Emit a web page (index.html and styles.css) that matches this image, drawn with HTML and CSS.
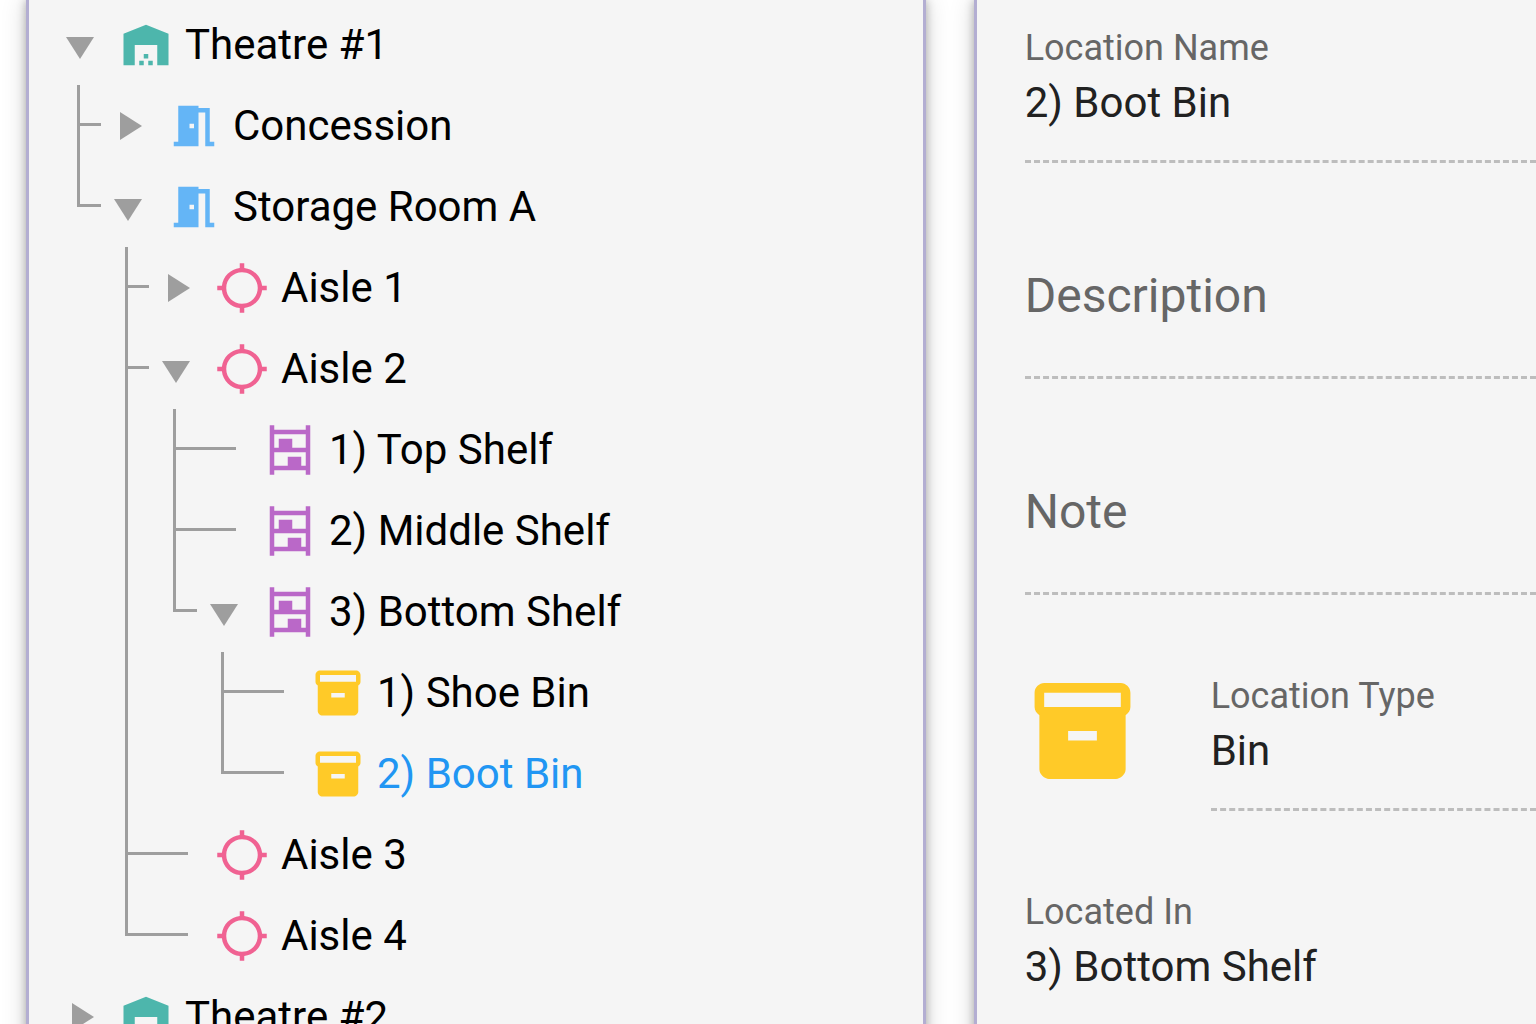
FILE: index.html
```html
<!DOCTYPE html>
<html lang="en">
<head>
<meta charset="utf-8">
<title>Locations</title>
<link rel="stylesheet" href="styles.css">
</head>
<body>
<svg class="sprite" aria-hidden="true">
  <symbol id="open" viewBox="0 0 28 28"><path d="M0 6H28L14 28Z"/></symbol>
  <symbol id="closed" viewBox="0 0 28 28"><path d="M6 0L28 14L6 28Z"/></symbol>
  <symbol id="warehouse" viewBox="0 0 24 24"><path d="M22 21V7L12 3 2 7v14h5v-9h10v9h5zm-11-2H9v2h2v-2zm2-3h-2v2h2v-2zm2 3h-2v2h2v-2z"/></symbol>
  <symbol id="room" viewBox="0 0 24 24"><path d="M14 6v15H3v-2h2V3h9v1h5v15h2v2h-4V6h-3zm-4 5v2h2v-2h-2z"/></symbol>
  <symbol id="aisle" viewBox="0 0 24 24"><path d="M20.94 11c-.46-4.17-3.77-7.48-7.94-7.94V1h-2v2.06C6.83 3.52 3.52 6.83 3.06 11H1v2h2.06c.46 4.17 3.77 7.48 7.94 7.94V23h2v-2.06c4.17-.46 7.48-3.77 7.94-7.94H23v-2h-2.06zM12 19c-3.87 0-7-3.13-7-7s3.13-7 7-7 7 3.13 7 7-3.13 7-7 7z"/></symbol>
  <symbol id="shelf" viewBox="0 0 24 24"><path d="M3 1h2v2h14V1h2v22h-2v-2H5v2H3zM5 5v6h2V7h6v4h6V5zM5 13v6h6v-4h6v4h2v-6z"/></symbol>
  <symbol id="bin" viewBox="0 0 24 24"><path d="M20 2H4c-1 0-2 .9-2 2v3.01c0 .72.43 1.34 1 1.69V20c0 1.1 1.1 2 2 2h14c.9 0 2-.9 2-2V8.7c.57-.35 1-.97 1-1.69V4c0-1.1-1-2-2-2zm-5 12H9v-2h6v2zm5-7H4V4h16v3z"/></symbol>
</svg>
<main class="layout">
  <nav class="panel" aria-label="Locations">
    <ul class="tree">
      <li class="node">
        <div class="row"><button class="toggle" aria-label="Collapse Theatre #1"><svg><use href="#open"/></svg></button><svg class="icon warehouse"><use href="#warehouse"/></svg><span>Theatre #1</span></div>
        <ul class="branch">
          <li class="node">
            <div class="row"><button class="toggle" aria-label="Expand Concession"><svg><use href="#closed"/></svg></button><svg class="icon room"><use href="#room"/></svg><span>Concession</span></div>
          </li>
          <li class="node">
            <div class="row"><button class="toggle" aria-label="Collapse Storage Room A"><svg><use href="#open"/></svg></button><svg class="icon room"><use href="#room"/></svg><span>Storage Room A</span></div>
            <ul class="branch">
              <li class="node">
                <div class="row"><button class="toggle" aria-label="Expand Aisle 1"><svg><use href="#closed"/></svg></button><svg class="icon aisle"><use href="#aisle"/></svg><span>Aisle 1</span></div>
              </li>
              <li class="node">
                <div class="row"><button class="toggle" aria-label="Collapse Aisle 2"><svg><use href="#open"/></svg></button><svg class="icon aisle"><use href="#aisle"/></svg><span>Aisle 2</span></div>
                <ul class="branch">
                  <li class="node leaf"><div class="row"><svg class="icon shelf"><use href="#shelf"/></svg><span>1) Top Shelf</span></div></li>
                  <li class="node leaf"><div class="row"><svg class="icon shelf"><use href="#shelf"/></svg><span>2) Middle Shelf</span></div></li>
                  <li class="node">
                    <div class="row"><button class="toggle" aria-label="Collapse 3) Bottom Shelf"><svg><use href="#open"/></svg></button><svg class="icon shelf"><use href="#shelf"/></svg><span>3) Bottom Shelf</span></div>
                    <ul class="branch">
                      <li class="node leaf"><div class="row"><svg class="icon bin"><use href="#bin"/></svg><span>1) Shoe Bin</span></div></li>
                      <li class="node leaf"><div class="row selected"><svg class="icon bin"><use href="#bin"/></svg><span>2) Boot Bin</span></div></li>
                    </ul>
                  </li>
                </ul>
              </li>
              <li class="node leaf"><div class="row"><svg class="icon aisle"><use href="#aisle"/></svg><span>Aisle 3</span></div></li>
              <li class="node leaf"><div class="row"><svg class="icon aisle"><use href="#aisle"/></svg><span>Aisle 4</span></div></li>
            </ul>
          </li>
        </ul>
      </li>
      <li class="node">
        <div class="row"><button class="toggle" aria-label="Expand Theatre #2"><svg><use href="#closed"/></svg></button><svg class="icon warehouse"><use href="#warehouse"/></svg><span>Theatre #2</span></div>
      </li>
    </ul>
  </nav>
  <form class="panel details">
    <div class="field">
      <label for="name">Location Name</label>
      <input id="name" type="text" value="2) Boot Bin">
    </div>
    <div class="field empty">
      <label for="description">Description</label>
      <input id="description" type="text">
    </div>
    <div class="field empty">
      <label for="note">Note</label>
      <input id="note" type="text">
    </div>
    <div class="type">
      <svg class="type-icon bin"><use href="#bin"/></svg>
      <div class="field">
        <label for="type">Location Type</label>
        <input id="type" type="text" value="Bin">
      </div>
    </div>
    <div class="field">
      <label for="parent">Located In</label>
      <input id="parent" type="text" value="3) Bottom Shelf">
    </div>
  </form>
</main>
</body>
</html>
```
FILE: styles.css
```css
* {
  box-sizing: border-box;
}

body {
  margin: 0;
  background: #fff;
  color: #000;
  font-family: Roboto, "Liberation Sans", sans-serif;
  font-size: 42px;
}

.sprite {
  display: none;
}

.layout {
  display: grid;
  grid-template-columns: 8fr 5fr;
  gap: 48px;
  height: 100vh;
  padding-left: 26px;
  overflow: hidden;
}

.panel {
  min-width: 0;
  border: solid #b3aed2;
  border-width: 0 3px;
  background: #f5f5f5;
  box-shadow: 0 0 9px rgba(0, 0, 0, 0.28), 0 0 24px rgba(0, 0, 0, 0.16);
}

/* Location tree */

.tree,
.branch {
  margin: 0;
  padding: 0;
  list-style: none;
}

.tree {
  padding-top: 4px;
}

.branch {
  padding-left: 48px;
}

.node {
  position: relative;
}

.row {
  display: flex;
  align-items: center;
  height: 81px;
  padding-left: 37px;
  white-space: nowrap;
}

.row span {
  margin-left: 12px;
}

.leaf > .row {
  padding-left: 90px;
}

.selected {
  color: #2196f3;
}

.toggle {
  width: 28px;
  height: 28px;
  margin-right: 25px;
  padding: 0;
  border: 0;
  background: none;
}

.toggle svg {
  display: block;
  width: 28px;
  height: 28px;
  fill: #9e9e9e;
}

.icon {
  flex: none;
  width: 54px;
  height: 54px;
}

.warehouse { fill: #4db6ac; }
.room { fill: #64b5f6; }
.aisle { fill: #f06292; }
.shelf { fill: #ba68c8; }
.bin { fill: #ffca28; }

/* Connector lines between a parent and its children */

.branch > .node::before,
.branch > .node::after {
  content: "";
  position: absolute;
  top: 0;
  left: 0;
  background: #9e9e9e;
}

.branch > .node::before {
  width: 3px;
  height: 100%;
}

.branch > .node:last-child::before {
  height: 41px;
}

.branch > .node::after {
  top: 38px;
  width: 24px;
  height: 3px;
}

.branch > .leaf::after {
  width: 63px;
}

/* Location details */

.details {
  display: flex;
  flex-direction: column;
  gap: 77px;
  padding: 24px 0 0 48px;
  border-right: 0;
}

.field {
  display: grid;
  grid-template-rows: 48px 60px;
  flex: none;
  padding-bottom: 28px;
  border-bottom: 3px dashed #bdbdbd;
}

.field label {
  color: #666;
  font-size: 36px;
  line-height: 48px;
}

.field input {
  width: 100%;
  min-width: 0;
  padding: 0;
  border: 0;
  outline: 0;
  background: none;
  color: #212121;
  font: inherit;
}

.empty {
  grid-template-rows: 112px;
  padding-bottom: 24px;
}

.empty label,
.empty input {
  grid-area: 1 / 1;
}

.empty label {
  font-size: 48px;
  line-height: 112px;
}

.type {
  display: flex;
  gap: 71px;
}

.type .field {
  flex: 1;
}

.type-icon {
  flex: none;
  width: 115px;
  height: 118px;
}
```
